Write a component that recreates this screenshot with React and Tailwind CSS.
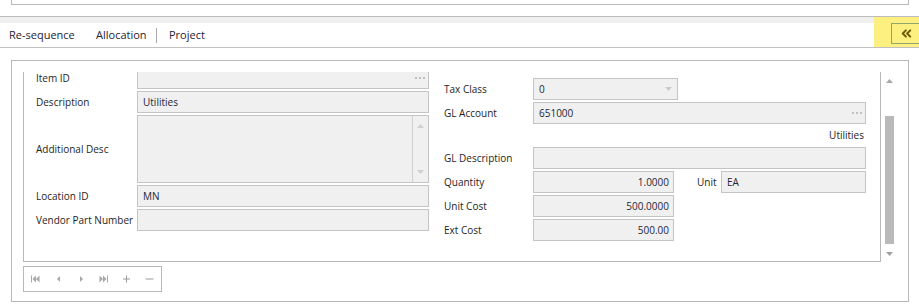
import { ChevronsLeft } from 'lucide-react'

const FONT = "font-['Open_Sans',sans-serif]"
const BOX = 'h-[22px] border border-[#c4c4c4] bg-[#f0f0f0] flex items-center text-[#1c2638]'
const LABEL = 'text-[#1e1e1e]'

const Dots = () => (
  <span className="ml-auto mr-[3px] flex gap-[2px]">
    <span className="w-[2px] h-[2px] bg-[#c0c0c0]" />
    <span className="w-[2px] h-[2px] bg-[#c0c0c0]" />
    <span className="w-[2px] h-[2px] bg-[#c0c0c0]" />
  </span>
)

const Tri = ({ dir = 'down', color = '#c2c2c2' }) => (
  <svg width="7" height="4" viewBox="0 0 7 4">
    {dir === 'down'
      ? <polygon points="0,0 7,0 3.5,4" fill={color} />
      : <polygon points="0,4 7,4 3.5,0" fill={color} />}
  </svg>
)

const NavIcon = ({ kind }) => {
  const c = '#a8a8a8'
  return (
    <svg width="9" height="8" viewBox="0 0 9 8">
      {kind === 'first' && <><rect x="0" y="0.5" width="1" height="7" fill={c} /><polygon points="5,0.5 1.5,4 5,7.5" fill={c} /><polygon points="8.5,0.5 5,4 8.5,7.5" fill={c} /></>}
      {kind === 'prev' && <polygon points="6,1 3,4 6,7" fill={c} />}
      {kind === 'next' && <polygon points="3,1 6,4 3,7" fill={c} />}
      {kind === 'last' && <><polygon points="0.5,0.5 4,4 0.5,7.5" fill={c} /><polygon points="4,0.5 7.5,4 4,7.5" fill={c} /><rect x="8" y="0.5" width="1" height="7" fill={c} /></>}
      {kind === 'plus' && <><rect x="1" y="3.5" width="7" height="1" fill="#9a9a9a" /><rect x="4" y="0.5" width="1" height="7" fill="#9a9a9a" /></>}
      {kind === 'minus' && <rect x="0.5" y="3.5" width="8" height="1" fill="#9a9a9a" />}
    </svg>
  )
}

function LeftRow({ label, children }) {
  return (
    <div className="flex items-center">
      <span className={`w-[101px] ${LABEL}`}>{label}</span>
      {children}
    </div>
  )
}

function RightRow({ label, children }) {
  return (
    <div className="flex items-center">
      <span className={`w-[89px] ${LABEL}`}>{label}</span>
      {children}
    </div>
  )
}

export default function App() {
  return (
    <div className={`w-[919px] h-[305px] bg-white overflow-hidden ${FONT} text-[10px]`}>
      {/* top panel edge */}
      <div className="h-[17px] border-b border-[#bcbcbc]">
        <div className="ml-[11px] w-[898px] h-[5px] border-x border-b border-[#b8b8b8]" />
      </div>

      {/* toolbar */}
      <div className="h-[31px] flex border-b border-[#c0c0c0]">
        <div className="flex-1 flex flex-col">
          <div className="h-[6px] bg-[#f0f0f0]" />
          <div className="flex-1 flex items-center pl-[9px] text-[11px] text-[#1e2433]">
            <span className="w-[87px]">Re-sequence</span>
            <span className="w-[60px]">Allocation</span>
            <span className="w-px h-[15px] bg-[#a8a8a8]" />
            <span className="ml-[12px]">Project</span>
          </div>
        </div>
        <div className="w-[45px] bg-[#fdf081] pt-[6px] pl-[17px]">
          <div className="w-[30px] h-[21px] border border-[#8ea86c] flex items-center pl-[7px]">
            <ChevronsLeft size={15} strokeWidth={3.2} color="#6e5c00" />
          </div>
        </div>
      </div>

      {/* detail panel */}
      <div className="mt-[12px] ml-[11px] w-[898px] h-[242px] border border-[#b8b8b8] pt-[11px] pl-[11px]">
        <div className="flex h-[190px]">
          <div className="w-[858px] h-full border-l border-r border-b border-[#b8b8b8] overflow-hidden">
            <div className="flex -mt-[5px]">
              {/* left column */}
              <div className="w-[420px] pl-[12px] flex flex-col gap-[2px]">
                <LeftRow label="Item ID">
                  <div className={`${BOX} w-[292px]`}><Dots /></div>
                </LeftRow>
                <LeftRow label="Description">
                  <div className={`${BOX} w-[292px] pl-[5px]`}>Utilities</div>
                </LeftRow>
                <LeftRow label="Additional Desc">
                  <div className="h-[68px] w-[292px] border border-[#c4c4c4] bg-[#f0f0f0] flex">
                    <div className="flex-1" />
                    <div className="w-[16px] border-l border-[#cfcfcf] flex flex-col items-center justify-between py-[8px]">
                      <Tri dir="up" color="#cfcfcf" />
                      <Tri dir="down" color="#cfcfcf" />
                    </div>
                  </div>
                </LeftRow>
                <LeftRow label="Location ID">
                  <div className={`${BOX} w-[292px] pl-[5px]`}>MN</div>
                </LeftRow>
                <LeftRow label="Vendor Part Number">
                  <div className={`${BOX} w-[292px]`} />
                </LeftRow>
              </div>

              {/* right column */}
              <div className="pt-[11px] flex flex-col gap-[2px]">
                <RightRow label="Tax Class">
                  <div className={`${BOX} w-[145px] pl-[5px] pr-[5px] justify-between`}>
                    <span>0</span>
                    <Tri dir="down" color="#cacaca" />
                  </div>
                </RightRow>
                <RightRow label="GL Account">
                  <div className={`${BOX} w-[333px] pl-[5px]`}>651000<Dots /></div>
                </RightRow>
                <div className="h-[19px] ml-[89px] w-[333px] flex items-center justify-end pr-[2px] text-[#1e1e1e]">Utilities</div>
                <RightRow label="GL Description">
                  <div className={`${BOX} w-[333px]`} />
                </RightRow>
                <RightRow label="Quantity">
                  <div className={`${BOX} w-[141px] justify-end pr-[4px]`}>1.0000</div>
                  <span className={`ml-[23px] w-[24px] ${LABEL}`}>Unit</span>
                  <div className={`${BOX} w-[145px] pl-[5px]`}>EA</div>
                </RightRow>
                <RightRow label="Unit Cost">
                  <div className={`${BOX} w-[141px] justify-end pr-[4px]`}>500.0000</div>
                </RightRow>
                <RightRow label="Ext Cost">
                  <div className={`${BOX} w-[141px] justify-end pr-[4px]`}>500.00</div>
                </RightRow>
              </div>
            </div>
          </div>

          {/* scrollbar */}
          <div className="w-[17px] h-full flex flex-col items-center">
            <div className="mt-[7px] h-[4px] flex"><Tri dir="up" color="#a8a8a8" /></div>
            <div className="mt-[33px] h-[128px] w-[9px] bg-[#b9b9b9]" />
            <div className="mt-[8px] h-[4px] flex"><Tri dir="down" color="#a0a0a0" /></div>
          </div>
        </div>

        {/* record navigator */}
        <div className="mt-[4px] w-[139px] h-[26px] border border-[#b8b8b8] flex items-center">
          {['first', 'prev', 'next', 'last', 'plus', 'minus'].map(k => (
            <span key={k} className="w-[23px] flex justify-center"><NavIcon kind={k} /></span>
          ))}
        </div>
      </div>
    </div>
  )
}
